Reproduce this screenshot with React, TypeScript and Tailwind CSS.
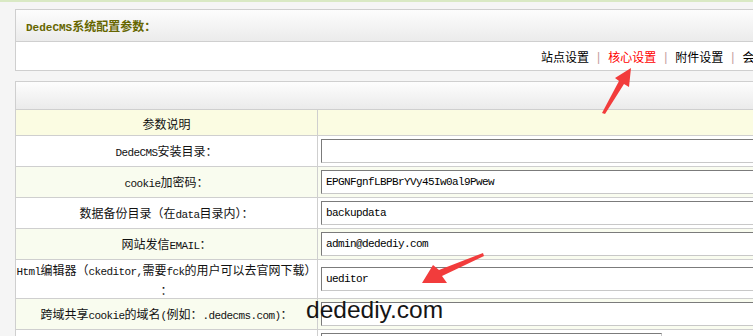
import React from 'react';

// Latin runs render in a narrow mono face, like SimSun's half-width glyphs
const L = ({ children, bold = false }: { children: React.ReactNode; bold?: boolean }) => (
  <span className={`font-['Liberation_Mono'] text-[11px] ${bold ? 'font-bold' : 'tracking-[-0.6px]'}`}>{children}</span>
);

const Field = ({ value = '', width = 'w-[640px]' }: { value?: string; width?: string }) => (
  <input
    readOnly
    value={value}
    className={`${width} h-[24px] shrink-0 bg-white border border-t-[#7b7b7b] border-l-[#7b7b7b] border-r-[#c8c8c8] border-b-[#c8c8c8] px-[4px] font-['Liberation_Mono'] text-[11px] tracking-[-0.6px] text-black outline-none`}
  />
);

interface RowProps {
  label: React.ReactNode;
  value?: string;
  alt?: boolean;
  tall?: boolean;
  fieldWidth?: string;
}

const Row = ({ label, value, alt, tall, fieldWidth }: RowProps) => (
  <div className={`flex border-b border-[#cfcfcf] ${alt ? 'bg-[#f9fcef]' : 'bg-white'}`}>
    <div className={`w-[302px] shrink-0 border-r border-[#cfcfcf] flex items-center justify-center text-center leading-[18px] whitespace-nowrap pt-[2px] ${tall ? 'h-[38px]' : 'h-[30px]'}`}>
      <div>{label}</div>
    </div>
    <div className="flex-1 flex items-center pl-[3px]">
      <Field value={value} width={fieldWidth} />
    </div>
  </div>
);

const links = ['站点设置', '核心设置', '附件设置', '会员设置', '性能选项'];

export default function App() {
  return (
    <div className="relative w-[753px] h-[336px] overflow-hidden bg-[#f5f5f5] font-['Noto_Sans_CJK_SC',sans-serif] text-[12px] text-[#111]">
      <div className="h-[2px] bg-[#d9e9c4]" />

      <div className="pl-[15px] pt-[7px]">
        {/* config title box */}
        <div className="w-[1000px] border border-[#cfcfcf] bg-white">
          <div className="h-[32px] border-b border-[#cfcfcf] bg-gradient-to-b from-[#fdfdfd] to-[#ebebeb] flex items-center pl-[10px] pt-[2px]">
            <span className="font-bold text-[#666600]">
              <L bold>DedeCMS</L>系统配置参数：
            </span>
          </div>
          <div className="h-[28px] flex items-center pl-[525px] pt-[2px] whitespace-nowrap">
            {links.map((t, i) => (
              <React.Fragment key={t}>
                {i > 0 && <span className="px-[8px] text-[#c49c9c] font-['Liberation_Sans']">|</span>}
                <span className={i === 1 ? 'text-[#ff0000]' : 'text-black'}>{t}</span>
              </React.Fragment>
            ))}
          </div>
        </div>

        {/* parameter table */}
        <div className="w-[1000px] mt-[10px] border border-b-0 border-[#cfcfcf] bg-white">
          <div className="h-[28px] border-b border-[#cfcfcf] bg-gradient-to-b from-[#fdfdfd] to-[#ebebeb]" />
          <div className="flex border-b border-[#cfcfcf] bg-[#fbfce2]">
            <div className="w-[302px] h-[25px] shrink-0 border-r border-[#cfcfcf] flex items-center justify-center pt-[2px]">参数说明</div>
            <div className="flex-1" />
          </div>
          <Row label={<><L>DedeCMS</L>安装目录：</>} />
          <Row alt label={<><L>cookie</L>加密码：</>} value="EPGNFgnfLBPBrYVy45Iw0al9Pwew" />
          <Row label={<>数据备份目录（在<L>data</L>目录内）：</>} value="backupdata" />
          <Row alt label={<>网站发信<L>EMAIL</L>：</>} value="admin@dedediy.com" />
          <Row
            tall
            label={<><L>Html</L>编辑器（<L>ckeditor,</L>需要<L>fck</L>的用户可以去官网下载）<br />：</>}
            value="ueditor"
          />
          <Row alt label={<>跨域共享<L>cookie</L>的域名<L>(</L>例如：<L>.dedecms.com)</L>：</>} />
          <Row label="" fieldWidth="w-[341px]" />
        </div>
      </div>

      {/* annotation arrows */}
      <svg className="absolute inset-0 pointer-events-none" width="753" height="336" viewBox="0 0 753 336">
        <polygon points="602,113 619,81 615,78 631,68 629,87 624,84 605,114" fill="#f23c3c" />
        <polygon points="483,253 439,270 433,265 422,283 447,283 442,276 484,256" fill="#f23c3c" />
      </svg>

      {/* watermark */}
      <div className="absolute left-[306px] top-[298px] font-['Liberation_Sans'] text-[24.5px] leading-none text-[#151515]">
        dedediy.com
      </div>
    </div>
  );
}
